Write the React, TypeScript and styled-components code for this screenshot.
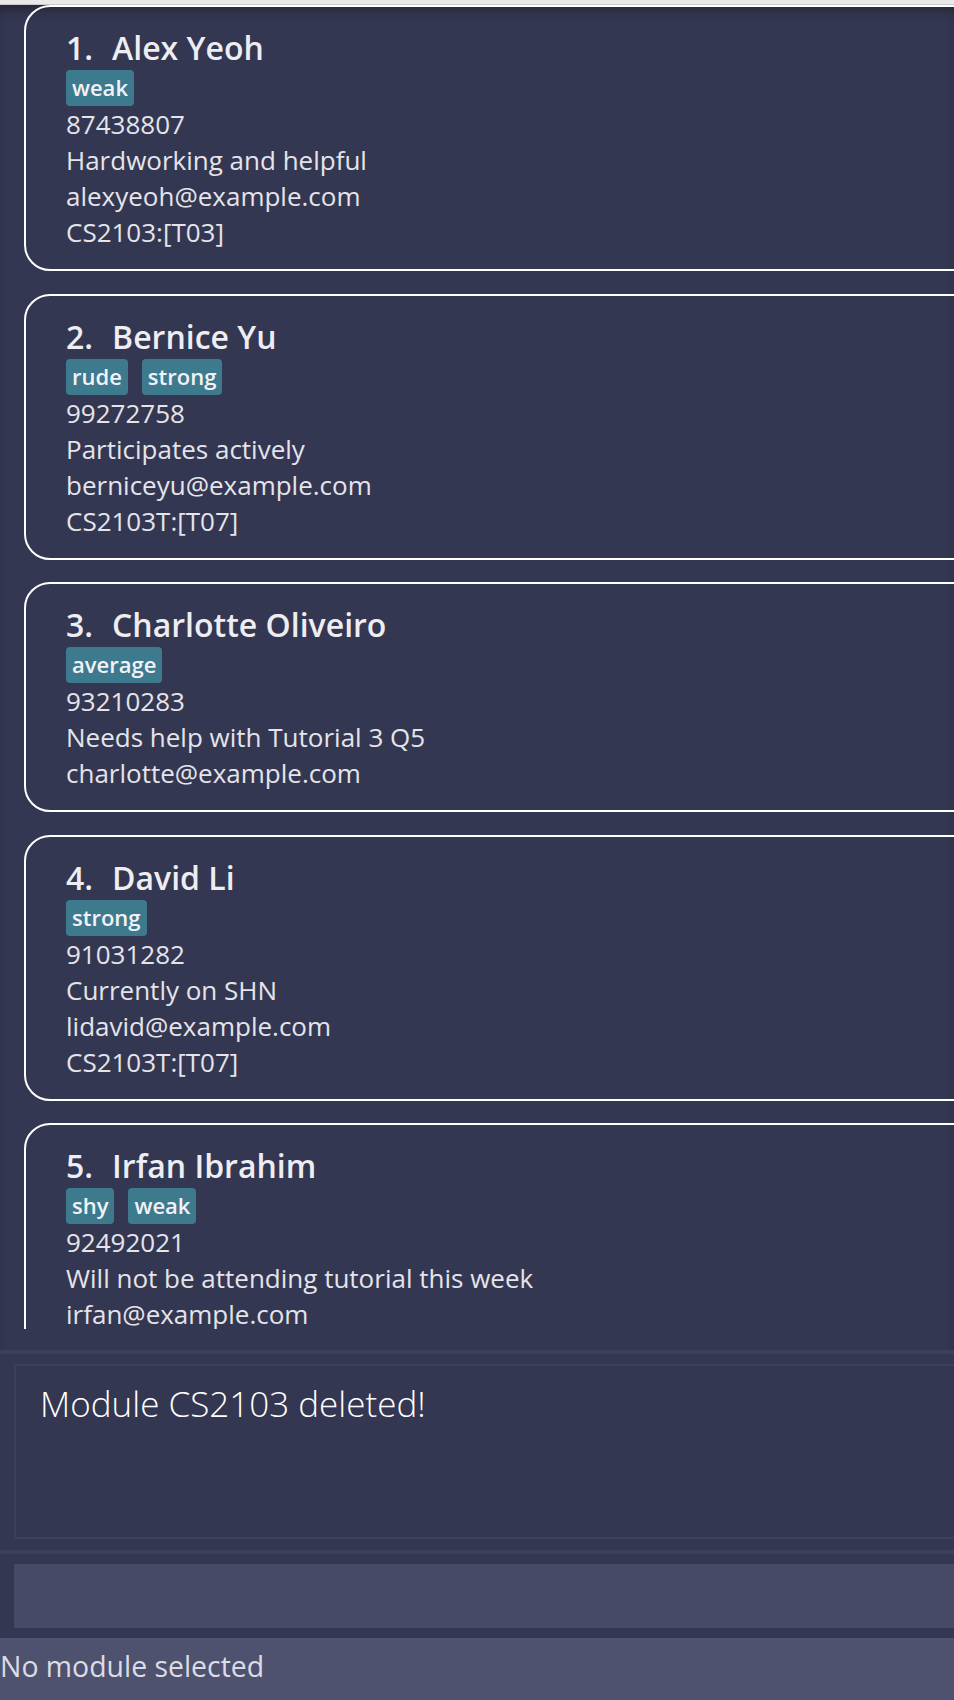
import React from 'react';
import styled, { createGlobalStyle } from 'styled-components';

const GlobalStyle = createGlobalStyle`
  html, body {
    margin: 0;
    padding: 0;
    background: #343751;
    overflow: hidden;
  }
  body {
    font-family: "Open Sans", "Noto Sans", sans-serif;
  }
  * { box-sizing: border-box; }
`;

const Window = styled.div`
  width: 954px;
  height: 1700px;
  display: flex;
  flex-direction: column;
  background: #343751;
  overflow: hidden;
`;

const MenuEdge = styled.div`
  flex: none;
  height: 5px;
  background: #e9e9e9;
  border-bottom: 1px solid #c9c9c9;
`;

const ListPanel = styled.section`
  flex: none;
  height: 1345px;
  display: flex;
  flex-direction: column;
  padding: 0 0 21px 24px;
  box-shadow: inset 0 10px 14px -6px rgba(0, 0, 0, 0.35);
`;

const ListViewport = styled.div`
  flex: 1;
  overflow: hidden;
  display: flex;
  flex-direction: column;
  align-items: flex-start;
  gap: 22.5px;
`;

const Card = styled.article`
  flex: none;
  width: 1000px;
  border: 2px solid #ffffff;
  border-radius: 26px;
  padding: 19px 0 19px 40px;
  display: flex;
  flex-direction: column;
`;

const NameRow = styled.div`
  display: flex;
  gap: 19px;
  height: 44px;
  line-height: 44px;
  font-size: 32px;
  font-weight: 600;
  color: #ededf2;
  white-space: nowrap;
`;

const TagRow = styled.div`
  display: flex;
  gap: 14px;
  height: 36px;
`;

const Tag = styled.span`
  display: block;
  height: 36px;
  padding: 0 6px 2px;
  line-height: 34px;
  font-size: 22px;
  font-weight: 600;
  color: #f2f2f6;
  background: #3e7a8e;
  border-radius: 4px;
`;

const Detail = styled.div`
  height: 36px;
  line-height: 36px;
  font-size: 26px;
  font-weight: 400;
  color: #e4e4ea;
  white-space: nowrap;
`;

const Divider = styled.div`
  flex: none;
  height: 4px;
  background: #3d4059;
`;

const ResultSection = styled.section`
  flex: none;
  height: 196px;
  padding: 10px 0 11px 14px;
  display: flex;
`;

const ResultBox = styled.div`
  flex: none;
  width: 1000px;
  border: 2px solid #3d405a;
  padding: 14px 0 0 24px;
  font-size: 35px;
  font-weight: 300;
  color: #ffffff;
  line-height: 48px;
  white-space: nowrap;
`;

const CommandSection = styled.section`
  flex: none;
  height: 84px;
  padding: 10px 0 10px 14px;
  display: flex;
`;

const CommandBox = styled.div`
  flex: 1;
  background: #464a66;
`;

const StatusBar = styled.footer`
  flex: none;
  height: 62px;
  background: #4f526f;
  padding: 9px 0 0 0;
  font-size: 28.4px;
  font-weight: 400;
  line-height: 38px;
  color: #dcdce4;
  white-space: nowrap;
`;

type Person = {
  name: string;
  tags: string[];
  phone: string;
  note: string;
  email: string;
  module?: string;
};

const people: Person[] = [
  { name: 'Alex Yeoh', tags: ['weak'], phone: '87438807', note: 'Hardworking and helpful', email: 'alexyeoh@example.com', module: 'CS2103:[T03]' },
  { name: 'Bernice Yu', tags: ['rude', 'strong'], phone: '99272758', note: 'Participates actively', email: 'berniceyu@example.com', module: 'CS2103T:[T07]' },
  { name: 'Charlotte Oliveiro', tags: ['average'], phone: '93210283', note: 'Needs help with Tutorial 3 Q5', email: 'charlotte@example.com' },
  { name: 'David Li', tags: ['strong'], phone: '91031282', note: 'Currently on SHN', email: 'lidavid@example.com', module: 'CS2103T:[T07]' },
  { name: 'Irfan Ibrahim', tags: ['shy', 'weak'], phone: '92492021', note: 'Will not be attending tutorial this week', email: 'irfan@example.com' },
];

export default function App() {
  return (
    <>
      <GlobalStyle />
      <Window>
        <MenuEdge />
        <ListPanel>
          <ListViewport>
            {people.map((p, i) => (
              <Card key={p.name}>
                <NameRow>
                  <span>{i + 1}.</span>
                  <span>{p.name}</span>
                </NameRow>
                <TagRow>
                  {p.tags.map((t) => (
                    <Tag key={t}>{t}</Tag>
                  ))}
                </TagRow>
                <Detail>{p.phone}</Detail>
                <Detail>{p.note}</Detail>
                <Detail>{p.email}</Detail>
                {p.module && <Detail>{p.module}</Detail>}
              </Card>
            ))}
          </ListViewport>
        </ListPanel>
        <Divider />
        <ResultSection>
          <ResultBox>Module CS2103 deleted!</ResultBox>
        </ResultSection>
        <Divider />
        <CommandSection>
          <CommandBox />
        </CommandSection>
        <StatusBar>No module selected</StatusBar>
      </Window>
    </>
  );
}
